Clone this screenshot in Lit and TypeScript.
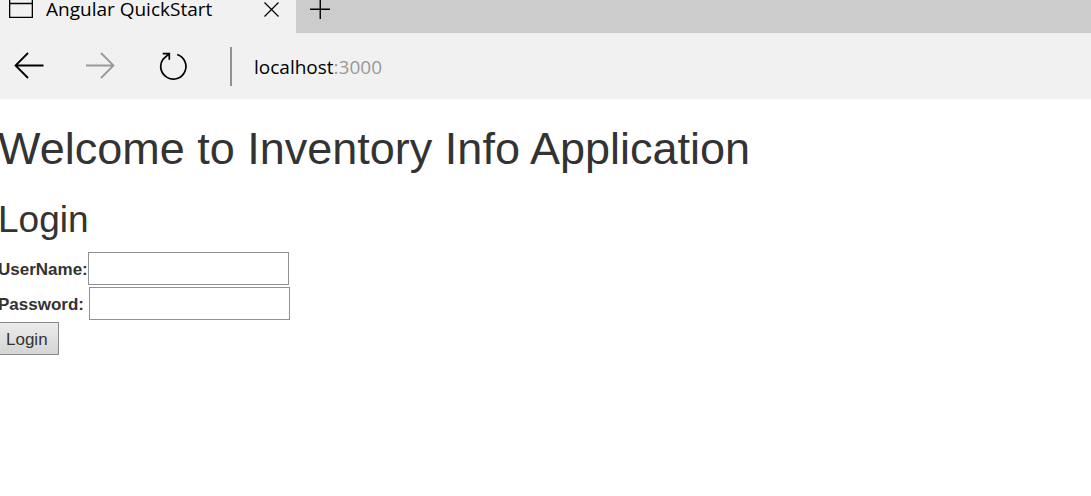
import { LitElement, html, css } from "lit";
import { customElement } from "lit/decorators.js";

@customElement("browser-chrome")
export class BrowserChrome extends LitElement {
  static styles = css`
    :host {
      display: block;
      font-family: "Open Sans", "Noto Sans", sans-serif;
      color: #000;
    }
    button {
      display: grid;
      place-items: center;
      border: 0;
      padding: 0;
      background: none;
      color: inherit;
    }
    svg {
      display: block;
      fill: none;
      stroke: currentColor;
    }
    .tabs {
      display: flex;
      height: 33px;
      background: #ccc;
    }
    .tab {
      display: flex;
      align-items: flex-start;
      box-sizing: border-box;
      width: 296px;
      padding: 0 16px 0 9px;
      background: #f1f1f1;
    }
    .title {
      flex: 1;
      margin-left: 13px;
      font-size: 19px;
      line-height: 18px;
      white-space: nowrap;
    }
    .new {
      align-self: flex-start;
      margin-left: 14px;
    }
    .bar {
      display: flex;
      align-items: center;
      height: 66px;
      padding-left: 14px;
      background: #f1f1f1;
    }
    .forward {
      margin-left: 41px;
      color: #999;
    }
    .reload {
      margin-left: 43px;
    }
    .divider {
      width: 2px;
      height: 39px;
      margin: 0 22px 0 42px;
      background: #919191;
    }
    .address {
      padding-top: 2px;
      font-size: 19px;
      line-height: 26px;
      color: #000;
      text-decoration: none;
    }
    .port {
      color: #999;
    }
  `;

  render() {
    return html`
      <div class="tabs">
        <div class="tab">
          <svg width="24" height="18" viewBox="0 0 24 18" stroke-width="1.3">
            <path d="M.65 -3V17.3H23.35V-3M.65 3.5H23.35" />
          </svg>
          <span class="title">Angular QuickStart</span>
          <button aria-label="Close tab">
            <svg width="17" height="18" viewBox="0 0 17 18" stroke-width="1.2">
              <path d="M1.5 2.5L15.5 16.5M15.5 2.5L1.5 16.5" />
            </svg>
          </button>
        </div>
        <button class="new" aria-label="New tab">
          <svg width="20" height="20" viewBox="0 0 20 20" stroke-width="1.4">
            <path d="M0 9.25H20M10.25 -1V19" />
          </svg>
        </button>
      </div>
      <div class="bar">
        <button aria-label="Back">
          <svg width="30" height="28" viewBox="0 0 30 28" stroke-width="1.8">
            <path d="M29.5 13.5H2M14 1L1.5 13.5L14 26" />
          </svg>
        </button>
        <button class="forward" aria-label="Forward">
          <svg width="30" height="28" viewBox="0 0 30 28" stroke-width="1.8">
            <path d="M1 13.5H28M16 1L28.5 13.5L16 26" />
          </svg>
        </button>
        <button class="reload" aria-label="Refresh">
          <svg width="30" height="28" viewBox="0 0 30 28" stroke-width="1.7">
            <path d="M19.2 2.5A12.6 12.6 0 1 1 5.2 7L11 1.9M4.7 1.7H11.3V7.8" />
          </svg>
        </button>
        <span class="divider"></span>
        <a class="address" href="#">localhost<span class="port">:3000</span></a>
      </div>
    `;
  }
}

@customElement("login-form")
export class LoginForm extends LitElement {
  static styles = css`
    :host {
      display: block;
      font-size: 17px;
    }
    h2 {
      margin: 0 0 11px;
      font-size: 37px;
      font-weight: 400;
      line-height: 42px;
    }
    form {
      display: grid;
      justify-items: start;
      gap: 2px;
    }
    .field {
      display: flex;
      align-items: center;
    }
    .spaced {
      gap: 5px;
    }
    label {
      padding-top: 2px;
      font-weight: 700;
      line-height: 24px;
    }
    input {
      box-sizing: border-box;
      width: 201px;
      height: 33px;
      padding: 2px 4px;
      border: 1px solid #919191;
      background: #fff;
      font: inherit;
      color: inherit;
    }
    button {
      height: 33px;
      padding: 2px 10px 0 7px;
      border: 1px solid #8a8a8a;
      background: linear-gradient(#ececec, #d4d4d4);
      font: inherit;
      color: inherit;
    }
  `;

  render() {
    return html`
      <h2>Login</h2>
      <form @submit=${(e: Event) => e.preventDefault()}>
        <div class="field">
          <label for="user">UserName:</label>
          <input id="user" type="text" />
        </div>
        <div class="field spaced">
          <label for="pass">Password:</label>
          <input id="pass" type="password" />
        </div>
        <button type="submit">Login</button>
      </form>
    `;
  }
}

@customElement("app-root")
export class AppRoot extends LitElement {
  static styles = css`
    :host {
      display: block;
      min-height: 100vh;
      background: #fff;
      font-family: "Liberation Sans", Arial, sans-serif;
      color: #333;
    }
    main {
      margin-left: -2px;
      padding-top: 25px;
    }
    h1 {
      margin: 0 0 25px;
      font-size: 45px;
      font-weight: 400;
      line-height: 50px;
    }
  `;

  render() {
    return html`
      <browser-chrome></browser-chrome>
      <main>
        <h1>Welcome to Inventory Info Application</h1>
        <login-form></login-form>
      </main>
    `;
  }
}
